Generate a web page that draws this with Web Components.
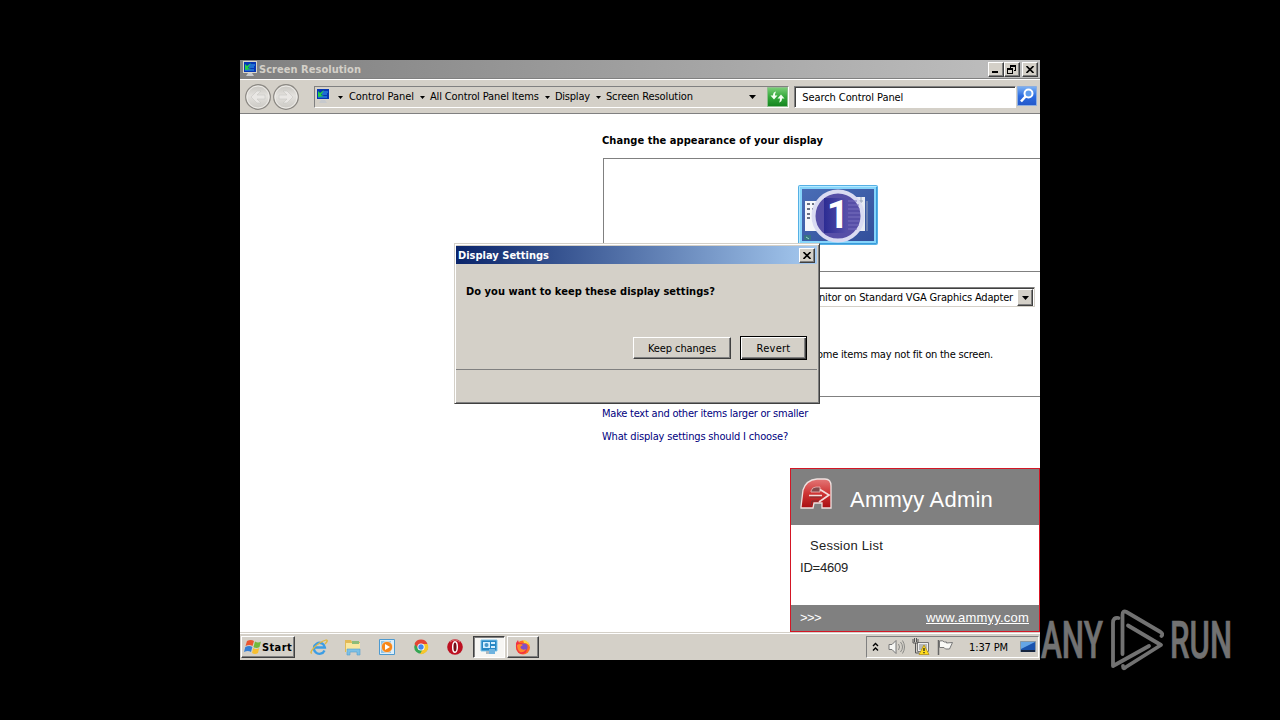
<!DOCTYPE html>
<html lang="en">
<head>
<meta charset="utf-8">
<title>Screen Resolution</title>
<style>
	html, body {
		margin: 0;
		width: 1280px;
		height: 720px;
		overflow: hidden;
		background: #000;
	}
	body {
		font: 11px/14px "DejaVu Sans Condensed", "DejaVu Sans", sans-serif;
		font-stretch: condensed;
		color: #000;
	}
</style>
</head>
<body>
<desktop-app></desktop-app>

<script>
const ICONS = {
	monitor: [16, 16, `<path d="M1 0h14v12H1z" fill="#d8d5ca"/><path d="M2 1h12v10H2z" fill="#0636b4"/><path d="M7 4h6M7 6h5M3 9h9" stroke="#39a6ed" fill="none"/><path d="M3 9V3l2 2 4-3-3 5 3 1z" fill="#25d044"/><path d="M6 12h4l2 3H4z" fill="#c6c9cd"/>`],
	back: [28, 28, `<defs><linearGradient id="g" x2="0" y2="1"><stop stop-color="#c5c3be"/><stop offset=".45" stop-color="#e4e2de"/><stop offset="1" stop-color="#c9c7c2"/></linearGradient></defs><circle cx="14" cy="14" r="12.3" fill="url(#g)" stroke="#8a8782" stroke-width="1.2"/><circle cx="14" cy="14" r="11" fill="none" stroke="#eeece8"/><path d="M21 12h-8l4-4h-4l-6 6 6 6h4l-4-4h8z" fill="#e9e7e4" stroke="#c8c6c2" stroke-width=".6"/>`],
	refresh: [21, 20, `<defs><linearGradient id="g" x2="0" y2="1"><stop stop-color="#7bcf78"/><stop offset=".5" stop-color="#34a83b"/><stop offset="1" stop-color="#14841f"/></linearGradient></defs><path d="M.5.5h20v19H.5z" fill="url(#g)" stroke="#8fbf8e"/><path d="M9 4.500q-3 .5-3 4H3.500L7 12.500l3.500-4H8q0-2 1-4zM12 15.500q3-.5 3-4h2.500L14 7.500l-3.500 4H13q0 2-1 4z" fill="#f5fff3"/>`],
	search: [20, 20, `<defs><linearGradient id="g" x2="0" y2="1"><stop stop-color="#7fb3f4"/><stop offset=".5" stop-color="#2c6ce0"/><stop offset="1" stop-color="#2458c9"/></linearGradient></defs><path d="M.5.5h19v19H.5z" fill="url(#g)" stroke="#8caee0"/><circle cx="11.500" cy="7.500" r="4" fill="#5d9bed" stroke="#fff" stroke-width="2"/><path d="M8.500 10.500L4 15.500" stroke="#fff" stroke-width="2.600"/>`],
	close: [8, 7, `<path d="M.5 0l7 7M7.500 0l-7 7" stroke="#000" stroke-width="1.600"/>`],
	minimize: [8, 8, `<path d="M0 6h6v2H0z"/>`],
	restore: [9, 9, `<path d="M3 0h6v6H7V5h1V2H4v1H3zM0 3h6v6H0zm1 2v3h4V5z" fill-rule="evenodd"/>`],
	down: [7, 4, `<path d="M0 0h7L3.500 4z"/>`],
	crumb: [5, 3, `<path d="M0 0h5L2.500 3z"/>`],
	screen: [80, 60, `<defs><linearGradient id="g" x2="1" y2="1"><stop stop-color="#4a6db6"/><stop offset="1" stop-color="#324f9b"/></linearGradient><linearGradient id="r" x2="1" y2="0"><stop stop-color="#2c2c93"/><stop offset="1" stop-color="#5650aa"/></linearGradient></defs>
		<rect x=".5" y=".5" width="79" height="59" rx="1" fill="#86d4fa" stroke="#55b0e5"/><path d="M1.500 58V1.500H78" fill="none" stroke="#b4e9ff"/><path d="M2 58.500h76.500V2" fill="none" stroke="#3a9bdb"/><path d="M4 4h72v52H4z" fill="url(#g)"/>
		<path d="M7 16h17v30H7z" fill="#f5f6fa"/><path d="M9 19h3M9 24h3M9 29h3M9 33h3M14 19h2M14 24h2M14 29h2" stroke="#6b7184" stroke-width="2"/><path d="M51 12h16v34H51z" fill="#e8ebf3"/><path d="M60 16h5M63 12v6M69 16v30" stroke="#98a3ba"/><path d="M6 50h7v5H6z" fill="#387384"/><path d="M8 52l3 2" stroke="#92dfbf"/>
		<circle cx="40" cy="31" r="24.500" fill="#574fa7" stroke="#dadbf2" stroke-width="4"/><path d="M26 13h23v35H26z" fill="url(#r)"/><path d="M50 16h9M50 20h11M50 24h12M50 28h12M50 32h12M50 36h12M50 40h11M50 44h9" stroke="#7971be"/>`],
	ammyy: [34, 34, `<defs><linearGradient id="g" x2="0" y2="1"><stop stop-color="#e47878"/><stop offset=".5" stop-color="#ce3434"/><stop offset="1" stop-color="#a80e12"/></linearGradient></defs><path d="M2 29L4 12Q7 2 18 1h8q6 0 6 7v22h-9v-5h-8l-1 5H2z" fill="url(#g)" stroke="#eee1df" stroke-width="1.300"/><path d="M12 13q1-4 5-4h4v5h-9z" fill="#84494b" stroke="#eebcbb" stroke-width=".8"/><path d="M11 19h11M12 28l1-5h7" fill="none" stroke="#743234"/><path d="M10 17.500h13M21 11.500l9 5.500-10 7" fill="none" stroke="#f4dddb" stroke-width="1.700"/>`],
	start: [18, 16, `<path d="M3 2q4-2 7 0L8.500 7q-3-2-7 0z" fill="#ea5630"/><path d="M11 2.500q3 2 6 0L15.500 8q-3 2-6 0z" fill="#72b93b"/><path d="M1.300 8q4-2 7 0L7 13q-3-2-7 0z" fill="#367fd4"/><path d="M9.200 9q3 2 6 0L14 14q-3 2-6 0z" fill="#f7bf30"/>`],
	ie: [18, 18, `<path d="M14.500 12.500a5.500 5.500 0 1 1 .4-3H5" fill="none" stroke="#3c9de4" stroke-width="2.300"/><path d="M2 15C-2 16 6 5 16 2q3 0-1 4" fill="none" stroke="#dfb842" stroke-width="1.300"/>`],
	folder: [18, 18, `<path d="M1 2h6l1 2h8v10H1z" fill="#e2b956"/><path d="M2 5h14v9H2z" fill="#f8e7a0"/><path d="M8 3h7v3H8z" fill="#8dbc79"/><path d="M3 17v-6h13v6h-3v-3H6v3z" fill="#7cc0e5" stroke="#569dcc" stroke-width=".6"/>`],
	media: [18, 18, `<path d="M1.500 1.500h15v15h-15z" fill="#dceefa" stroke="#4d9ad0"/><path d="M3 3h10v12H3z" fill="#8ec5e8"/><circle cx="9" cy="9" r="5.600" fill="#f78719" stroke="#fff" stroke-width=".5"/><path d="M7 6v6l5-3z" fill="#fff"/>`],
	chrome: [18, 18, `<circle cx="9" cy="9" r="6.800" fill="#35a653"/><path d="M2.500 6A7 7 0 0 1 15.500 6H9L6 10z" fill="#e54334"/><path d="M15.500 6A7 7 0 0 1 8 16l4-7-3-3z" fill="#f8c62b"/><circle cx="9" cy="9" r="3.600" fill="#fff"/><circle cx="9" cy="9" r="2.700" fill="#4286ed"/>`],
	opera: [18, 18, `<circle cx="9" cy="9" r="7.800" fill="#bd1021"/><path d="M4 4q5-4 10 0" stroke="#e27878" fill="none"/><ellipse cx="9" cy="9" rx="2.300" ry="5.300" fill="#761018" stroke="#fff" stroke-width="1.500"/>`],
	display: [18, 18, `<path d="M1 2h16v11H1z" fill="#2787c4" stroke="#80c5eb"/><path d="M3 4h7v6H3zM11 4h4v2h-4zM11 8h4v2h-4z" fill="#d4efff"/><circle cx="6.500" cy="7" r="2" fill="#4796c9"/><path d="M6 13h4v3H6z" fill="#b1bac0"/><path d="M9 11h6v5H9z" fill="#6fb3df"/>`],
	firefox: [18, 18, `<circle cx="9" cy="9.500" r="7" fill="#ff6c24"/><path d="M9 2q7 1 7 7.500Q15 5 10 5z" fill="#ffd83d"/><path d="M2 5l2-3 1 3h4l-3 4q2 5 7 2 0 5-6 5-6-2-5-11" fill="#f23343"/><circle cx="10" cy="9" r="3.600" fill="#8050c7"/><path d="M3 7q3-2 6 0l-3 2q2 4 6 2-2 4-6 3-3-2-3-7" fill="#ff882c"/>`],
	chevrons: [7, 10, `<path d="M1 4l2.500-2.500L6 4M1 8.500L3.500 6 6 8.500" fill="none" stroke="#000" stroke-width="1.400"/>`],
	speaker: [18, 16, `<path d="M1 5.500h3l4-4v13l-4-4H1z" fill="#f6f6f3" stroke="#777"/><path d="M10.500 5q2 3 0 6M12.500 3q4 5 0 10M14.500 1.500q4 6.500 0 13" fill="none" stroke="#8a8a87"/>`],
	network: [18, 18, `<path d="M5.500 4.500h11v9h-11z" fill="#eee" stroke="#777"/><path d="M7 6h8v6H7z" fill="#b6b8b8"/><path d="M1 1v4h5V1M2.500 0v4M4.500 0v4M3.500 5v10H7" fill="none" stroke="#555"/><path d="M12 7l5 9.500H7z" fill="#ffdc1b" stroke="#aa850c" stroke-width=".7"/><path d="M12 10v3M12 14v1.200" stroke="#222" stroke-width="1.300"/>`],
	flag: [18, 17, `<path d="M2.500 1v15" stroke="#666" stroke-width="1.500"/><path d="M3.500 2q3-1 5 1h2v1l6-.5-3 6.500H9.500L8 8.500H3.500z" fill="#f9f9f6" stroke="#777"/>`],
	desktop: [16, 14, `<path d="M.5 1.500h15v10H.5z" fill="#1a53ad" stroke="#8798a6"/><path d="M1 2h14L1 9z" fill="#65a5e6"/><path d="M1 10h14v2H1z" fill="#15243d"/>`],
	play: [56, 64, `<g fill="none" stroke="#727272" stroke-width="3.800" stroke-linejoin="round" stroke-linecap="round"><path d="M14.500 46V7q0-5 4-3l34 20q3 2 1 4"/><path d="M10.500 10Q5 9 5 15v43l36-20"/><path d="M20 17.500L53 37 18 59q-3 3-3-1"/></g>`]
};

class UiIcon extends HTMLElement {
	constructor() {
		super();
		this.attachShadow({ mode: "open" });
	}

	connectedCallback() {
		const [w, h, body] = ICONS[this.getAttribute("name")];
		this.shadowRoot.innerHTML = `
			<style>
				:host { display: block; flex: none; }
				svg { display: block; }
			</style>
			<svg width="${w}" height="${h}" viewBox="0 0 ${w} ${h}">${body}</svg>
		`;
	}
}

// One line of text, spaced (or squeezed) to the given width
class UiText extends HTMLElement {
	constructor() {
		super();
		this.attachShadow({ mode: "open" });
		this.shadowRoot.innerHTML = `
			<style>
				:host {
					display: block;
					flex: none;
					white-space: nowrap;
					transform: translateY(var(--text-shift, 1px));
				}
				:host([underline]) span { text-decoration: underline; }
				span { display: inline-block; transform-origin: 0 50%; }
			</style>
			<span><slot></slot></span>
		`;
	}

	connectedCallback() {
		const width = Number(this.getAttribute("width"));
		const span = this.shadowRoot.querySelector("span");
		const natural = span.getBoundingClientRect().width;
		this.style.width = width + "px";
		if (this.hasAttribute("squeeze")) {
			span.style.transform = `scaleX(${width / natural})`;
		} else {
			span.style.letterSpacing = (width - natural) / this.textContent.length + "px";
		}
	}
}

class UiButton extends HTMLElement {
	constructor() {
		super();
		this.attachShadow({ mode: "open" });
		this.shadowRoot.innerHTML = `
			<style>
				:host {
					display: flex;
					flex: none;
					align-items: center;
					justify-content: center;
					box-sizing: border-box;
					background: #d4d0c8;
					border: 1px solid;
					border-color: #fff #404040 #404040 #fff;
					box-shadow: inset -1px -1px #808080;
				}
				:host([default]) {
					border-color: #000;
					box-shadow: inset 1px 1px #fff, inset -1px -1px #404040, inset -2px -2px #808080;
				}
				:host([pressed]) {
					background: #f7f6f3;
					border-color: #404040 #fff #fff #404040;
					box-shadow: inset 1px 1px #808080;
				}
			</style>
			<slot></slot>
		`;
	}
}

class TitleBar extends HTMLElement {
	constructor() {
		super();
		this.attachShadow({ mode: "open" });
		this.shadowRoot.innerHTML = `
			<style>
				:host {
					display: flex;
					align-items: center;
					height: 18px;
					flex: none;
					box-sizing: border-box;
					padding: 0 2px;
					font-weight: bold;
					color: #fff;
					background: linear-gradient(90deg, #0a246a, #a6caf0);
				}
				:host([inactive]) {
					color: #d4d0c8;
					background: linear-gradient(90deg, #808080, #c0c0c0);
				}
				.buttons { display: flex; margin-left: auto; }
			</style>
			<slot></slot>
			<div class="buttons"><slot name="buttons"></slot></div>
		`;
	}
}

class AddressBar extends HTMLElement {
	constructor() {
		super();
		this.attachShadow({ mode: "open" });
		this.shadowRoot.innerHTML = `
			<style>
				:host {
					display: flex;
					flex: none;
					height: 36px;
					box-sizing: border-box;
					padding: 7px 3px 0 4px;
					background: #d4d0c8;
					border-top: 1px solid #808080;
					border-bottom: 1px solid #808080;
					box-shadow: inset 0 1px #fff;
				}
				.nav { display: flex; width: 70px; margin-top: -3px; }
				.path, .search {
					box-sizing: border-box;
					height: 22px;
					display: flex;
					align-items: center;
					border: 1px solid;
					border-color: #808080 #fff #fff #808080;
				}
				.path { width: 476px; --text-shift: 0px; }
				.path ui-icon[name=monitor] { margin: -2px 7px 0 0; }
				.crumb { display: flex; align-items: center; gap: 5px; margin-right: 6px; }
				.root { gap: 6px; }
				.end { margin: 0 11px 0 auto; }
				.search {
					width: 222px;
					margin-left: 5px;
					padding-left: 7px;
					background: #fff;
					box-shadow: inset 1px 1px #404040;
				}
				.go { margin-left: 1px; }
			</style>
			<div class="nav">
				<ui-icon name="back"></ui-icon>
				<ui-icon name="back" style="transform: scaleX(-1)"></ui-icon>
			</div>
			<div class="path">
				<ui-icon name="monitor"></ui-icon>
				<div class="crumb root"><ui-icon name="crumb"></ui-icon><ui-text width="65">Control Panel</ui-text></div>
				<div class="crumb"><ui-icon name="crumb"></ui-icon><ui-text width="109">All Control Panel Items</ui-text></div>
				<div class="crumb"><ui-icon name="crumb"></ui-icon><ui-text width="35">Display</ui-text></div>
				<div class="crumb"><ui-icon name="crumb"></ui-icon><ui-text width="87">Screen Resolution</ui-text></div>
				<ui-icon class="end" name="down"></ui-icon>
				<ui-icon name="refresh"></ui-icon>
			</div>
			<div class="search"><ui-text width="101">Search Control Panel</ui-text></div>
			<ui-icon class="go" name="search"></ui-icon>
		`;
	}
}

class ResolutionPage extends HTMLElement {
	constructor() {
		super();
		this.attachShadow({ mode: "open" });
		this.shadowRoot.innerHTML = `
			<style>
				:host {
					display: block;
					flex: 1;
					box-sizing: border-box;
					padding: 19px 0 0 362px;
					background: #fff;
				}
				h1 { margin: 0 0 11px; font: inherit; font-weight: bold; }
				.panel {
					margin-left: 1px;
					height: 237px;
					border: 1px solid #808080;
					border-right: 0;
				}
				.preview {
					height: 113px;
					box-sizing: border-box;
					padding: 26px 0 0 194px;
					border-bottom: 1px solid #808080;
				}
				.screen { display: grid; width: 80px; height: 60px; }
				.screen > * { grid-area: 1 / 1; }
				.number {
					place-self: center;
					font: bold 39px/44px Roboto, sans-serif;
					color: #fff;
				}
				.select {
					display: flex;
					align-items: center;
					justify-content: flex-end;
					box-sizing: border-box;
					width: 421px;
					height: 20px;
					margin: 15px 0 0 10px;
					padding-right: 1px;
					border: 1px solid;
					border-color: #808080 #d4d0c8 #d4d0c8 #808080;
					box-shadow: inset 0 1px #404040;
				}
				.select ui-button { width: 16px; height: 17px; margin: 1px 0 0 4px; }
				.note { margin: 40px 0 0 213px; }
				.links { display: flex; flex-direction: column; gap: 9px; margin-top: 9px; color: #000080; }
			</style>
			<h1><ui-text width="221">Change the appearance of your display</ui-text></h1>
			<div class="panel">
				<div class="preview">
					<div class="screen"><ui-icon name="screen"></ui-icon><div class="number">1</div></div>
				</div>
				<div class="select">
					<ui-text width="194">nitor on Standard VGA Graphics Adapter</ui-text>
					<ui-button><ui-icon name="down"></ui-icon></ui-button>
				</div>
				<div class="note"><ui-text width="176">ome items may not fit on the screen.</ui-text></div>
			</div>
			<div class="links">
				<ui-text width="206">Make text and other items larger or smaller</ui-text>
				<ui-text width="186">What display settings should I choose?</ui-text>
			</div>
		`;
	}
}

class SettingsDialog extends HTMLElement {
	constructor() {
		super();
		this.attachShadow({ mode: "open" });
		this.shadowRoot.innerHTML = `
			<style>
				:host {
					display: flex;
					flex-direction: column;
					box-sizing: border-box;
					width: 366px;
					height: 161px;
					padding: 2px 2px 0 1px;
					background: #d4d0c8;
					border: 1px solid;
					border-color: #d4d0c8 #404040 #404040 #d4d0c8;
					box-shadow: inset 1px 1px #fff, inset -1px -1px #808080;
				}
				.close { width: 16px; height: 15px; }
				.question { margin: 20px 0 0 10px; font-weight: bold; }
				.actions {
					display: flex;
					justify-content: flex-end;
					align-items: center;
					gap: 9px;
					margin-top: 38px;
					padding-right: 10px;
				}
				.keep { width: 98px; height: 22px; }
				.revert { width: 67px; height: 24px; }
				.line { margin-top: 9px; border-top: 1px solid #808080; }
			</style>
			<title-bar>
				<ui-text width="91">Display Settings</ui-text>
				<ui-button slot="buttons" class="close"><ui-icon name="close"></ui-icon></ui-button>
			</title-bar>
			<div class="question"><ui-text width="249">Do you want to keep these display settings?</ui-text></div>
			<div class="actions">
				<ui-button class="keep"><ui-text width="68">Keep changes</ui-text></ui-button>
				<ui-button class="revert" default><ui-text width="34">Revert</ui-text></ui-button>
			</div>
			<div class="line"></div>
		`;
	}
}

class AmmyyPanel extends HTMLElement {
	constructor() {
		super();
		this.attachShadow({ mode: "open" });
		this.shadowRoot.innerHTML = `
			<style>
				:host {
					display: flex;
					flex-direction: column;
					box-sizing: border-box;
					width: 250px;
					height: 164px;
					background: #fff;
					border: 1px solid #d31625;
					font: 13px/16px "Liberation Sans", sans-serif;
				}
				header, footer {
					--text-shift: 0px;
					display: flex;
					flex: none;
					align-items: center;
					box-sizing: border-box;
					background: #808080;
					color: #fff;
				}
				header { height: 56px; padding-left: 8px; font-size: 22px; line-height: 26px; }
				header ui-icon { margin: -5px 17px 0 0; }
				header ui-text { margin-top: 5px; }
				.list { flex: 1; padding: 12px 0 0 9px; color: #222; }
				.list ui-text + ui-text { margin-top: 6px; }
				.session { margin-left: 10px; }
				footer { height: 26px; padding: 0 10px 0 9px; justify-content: space-between; }
			</style>
			<header>
				<ui-icon name="ammyy"></ui-icon>
				<ui-text width="143">Ammyy Admin</ui-text>
			</header>
			<div class="list">
				<ui-text class="session" width="73">Session List</ui-text>
				<ui-text width="48">ID=4609</ui-text>
			</div>
			<footer>
				<ui-text width="21">&gt;&gt;&gt;</ui-text>
				<ui-text width="103" underline>www.ammyy.com</ui-text>
			</footer>
		`;
	}
}

class TaskBar extends HTMLElement {
	constructor() {
		super();
		this.attachShadow({ mode: "open" });
		this.shadowRoot.innerHTML = `
			<style>
				:host {
					display: flex;
					flex: none;
					height: 28px;
					box-sizing: border-box;
					padding: 4px 1px 2px 1px;
					background: #d4d0c8;
					box-shadow: inset 0 1px #d4d0c8, inset 0 2px #fff;
				}
				.start { width: 54px; font-weight: bold; }
				.quick { display: flex; align-items: center; gap: 16px; margin: 0 9px 0 15px; }
				.task { width: 32px; margin-right: 2px; }
				.tray {
					display: flex;
					align-items: center;
					box-sizing: border-box;
					width: 173px;
					margin-left: auto;
					padding-left: 5px;
					border: 1px solid;
					border-color: #808080 #fff #fff #808080;
				}
			</style>
			<ui-button class="start"><ui-icon name="start"></ui-icon><ui-text width="30">Start</ui-text></ui-button>
			<div class="quick">
				<ui-icon name="ie"></ui-icon>
				<ui-icon name="folder"></ui-icon>
				<ui-icon name="media"></ui-icon>
				<ui-icon name="chrome"></ui-icon>
				<ui-icon name="opera"></ui-icon>
			</div>
			<ui-button class="task" pressed><ui-icon name="display"></ui-icon></ui-button>
			<ui-button class="task"><ui-icon name="firefox"></ui-icon></ui-button>
			<div class="tray">
				<ui-icon name="chevrons" style="margin-right: 9px"></ui-icon>
				<ui-icon name="speaker" style="margin-right: 6px"></ui-icon>
				<ui-icon name="network" style="margin-right: 6px"></ui-icon>
				<ui-icon name="flag" style="margin-right: 15px"></ui-icon>
				<ui-text width="39">1:37 PM</ui-text>
				<ui-icon name="desktop" style="margin-left: 12px"></ui-icon>
			</div>
		`;
	}
}

class AnyRunMark extends HTMLElement {
	constructor() {
		super();
		this.attachShadow({ mode: "open" });
		this.shadowRoot.innerHTML = `
			<style>
				:host {
					display: flex;
					align-items: center;
					height: 64px;
					font: 500 51px/64px Roboto, sans-serif;
					color: #727272;
					-webkit-text-stroke: .7px #727272;
				}
				ui-icon { margin: 0 6px 0 5px; }
			</style>
			<ui-text width="62" squeeze>ANY</ui-text>
			<ui-icon name="play"></ui-icon>
			<ui-text width="62" squeeze>RUN</ui-text>
		`;
	}
}

class DesktopApp extends HTMLElement {
	constructor() {
		super();
		this.attachShadow({ mode: "open" });
		this.shadowRoot.innerHTML = `
			<style>
				:host {
					display: block;
					box-sizing: border-box;
					width: 1280px;
					height: 720px;
					padding: 60px 240px;
					position: relative;
				}
				.screen {
					display: flex;
					flex-direction: column;
					width: 800px;
					height: 600px;
					overflow: hidden;
				}
				title-bar ui-icon { margin-right: 1px; }
				title-bar ui-button { width: 16px; height: 15px; }
				.close { margin-left: 2px; }
				settings-dialog { position: absolute; left: 454px; top: 243px; }
				ammyy-panel { position: absolute; left: 790px; top: 468px; }
				any-run-mark { position: absolute; left: 1041px; top: 608px; }
			</style>
			<div class="screen">
				<title-bar inactive>
					<ui-icon name="monitor"></ui-icon>
					<ui-text width="102">Screen Resolution</ui-text>
					<ui-button slot="buttons"><ui-icon name="minimize"></ui-icon></ui-button>
					<ui-button slot="buttons"><ui-icon name="restore"></ui-icon></ui-button>
					<ui-button slot="buttons" class="close"><ui-icon name="close"></ui-icon></ui-button>
				</title-bar>
				<address-bar></address-bar>
				<resolution-page></resolution-page>
				<task-bar></task-bar>
			</div>
			<settings-dialog></settings-dialog>
			<ammyy-panel></ammyy-panel>
			<any-run-mark></any-run-mark>
		`;
	}
}

customElements.define("ui-icon", UiIcon);
customElements.define("ui-text", UiText);
customElements.define("ui-button", UiButton);
customElements.define("title-bar", TitleBar);
customElements.define("address-bar", AddressBar);
customElements.define("resolution-page", ResolutionPage);
customElements.define("settings-dialog", SettingsDialog);
customElements.define("ammyy-panel", AmmyyPanel);
customElements.define("task-bar", TaskBar);
customElements.define("any-run-mark", AnyRunMark);
customElements.define("desktop-app", DesktopApp);
</script>
</body>
</html>
